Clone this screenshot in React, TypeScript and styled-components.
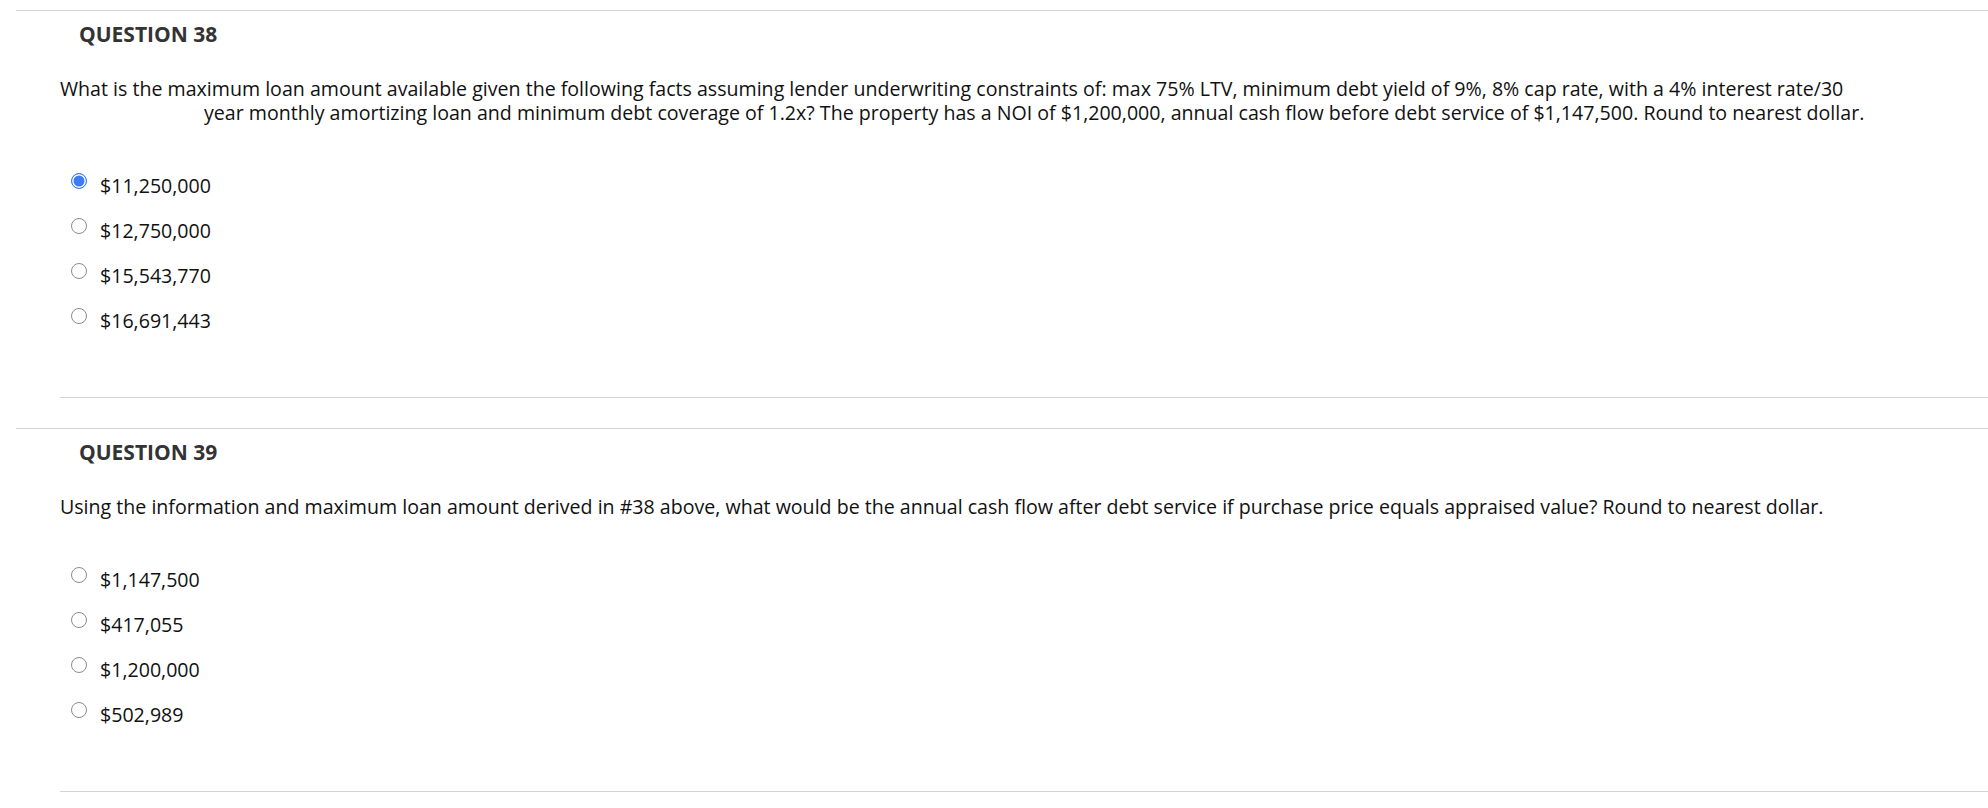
import React, { ReactElement } from 'react';
import styled, { createGlobalStyle } from 'styled-components';

const GlobalStyle = createGlobalStyle`
  html, body {
    margin: 0;
    padding: 0;
    background: #ffffff;
  }
  body {
    font-family: "Open Sans", "Liberation Sans", sans-serif;
  }
`;

// 시험 문제 목록 전체
const Page = styled.div`
  display: flex;
  flex-direction: column;
  padding: 10px 0 18px 16px;
`;

const QuestionBlock = styled.section`
  display: flex;
  flex-direction: column;
  border-top: 1px solid #d2d2d2;
`;

const Heading = styled.h3`
  margin: 0;
  padding: 9px 0 0 63px;
  font-size: 21px;
  line-height: 28px;
  font-weight: 700;
  color: #333333;
`;

const QuestionText = styled.p`
  margin: 29px 0 0 0;
  padding: 0 118px 0 188px;
  text-indent: -144px;
  font-size: 19.6px;
  line-height: 24px;
  color: #111111;
`;

const OptionList = styled.ul`
  display: flex;
  flex-direction: column;
  gap: 21px;
  list-style: none;
  margin: 49px 0 0 0;
  padding: 0 0 0 55px;
`;

const OptionRow = styled.li`
  display: flex;
  align-items: flex-start;
  gap: 13px;
  font-size: 19.6px;
  line-height: 24px;
  color: #111111;
`;

const Radio = styled.span<{ $checked?: boolean }>`
  flex: none;
  box-sizing: border-box;
  width: 16px;
  height: 16px;
  margin-top: -1px;
  border-radius: 50%;
  border: ${(p) => (p.$checked ? '1.5px solid #3b7cf4' : '1px solid #8c8c8c')};
  background: ${(p) => (p.$checked ? '#3b7cf4' : '#ffffff')};
  box-shadow: ${(p) => (p.$checked ? 'inset 0 0 0 1.5px #ffffff' : 'none')};
`;

const Divider = styled.hr`
  margin: 64px 0 30px 44px;
  border: none;
  border-top: 1px solid #d2d2d2;
  height: 0;
`;

interface Question {
  number: number;
  text: string;
  options: string[];
  selected?: number;
}

const questions: Question[] = [
  {
    number: 38,
    text:
      'What is the maximum loan amount available given the following facts assuming lender underwriting constraints of: max 75% LTV, minimum debt yield of 9%, 8% cap rate, with a 4% interest rate/30 year monthly amortizing loan and minimum debt coverage of 1.2x? The property has a NOI of $1,200,000, annual cash flow before debt service of $1,147,500. Round to nearest dollar.',
    options: ['$11,250,000', '$12,750,000', '$15,543,770', '$16,691,443'],
    selected: 0,
  },
  {
    number: 39,
    text:
      'Using the information and maximum loan amount derived in #38 above, what would be the annual cash flow after debt service if purchase price equals appraised value? Round to nearest dollar.',
    options: ['$1,147,500', '$417,055', '$1,200,000', '$502,989'],
  },
];

function App(): ReactElement {
  return (
    <>
      <GlobalStyle />
      <Page>
        {questions.map((q) => (
          <QuestionBlock key={q.number}>
            <Heading>QUESTION {q.number}</Heading>
            <QuestionText>{q.text}</QuestionText>
            <OptionList>
              {q.options.map((opt, i) => (
                <OptionRow key={opt}>
                  <Radio $checked={q.selected === i} />
                  {opt}
                </OptionRow>
              ))}
            </OptionList>
            <Divider />
          </QuestionBlock>
        ))}
      </Page>
    </>
  );
}

export default App;
